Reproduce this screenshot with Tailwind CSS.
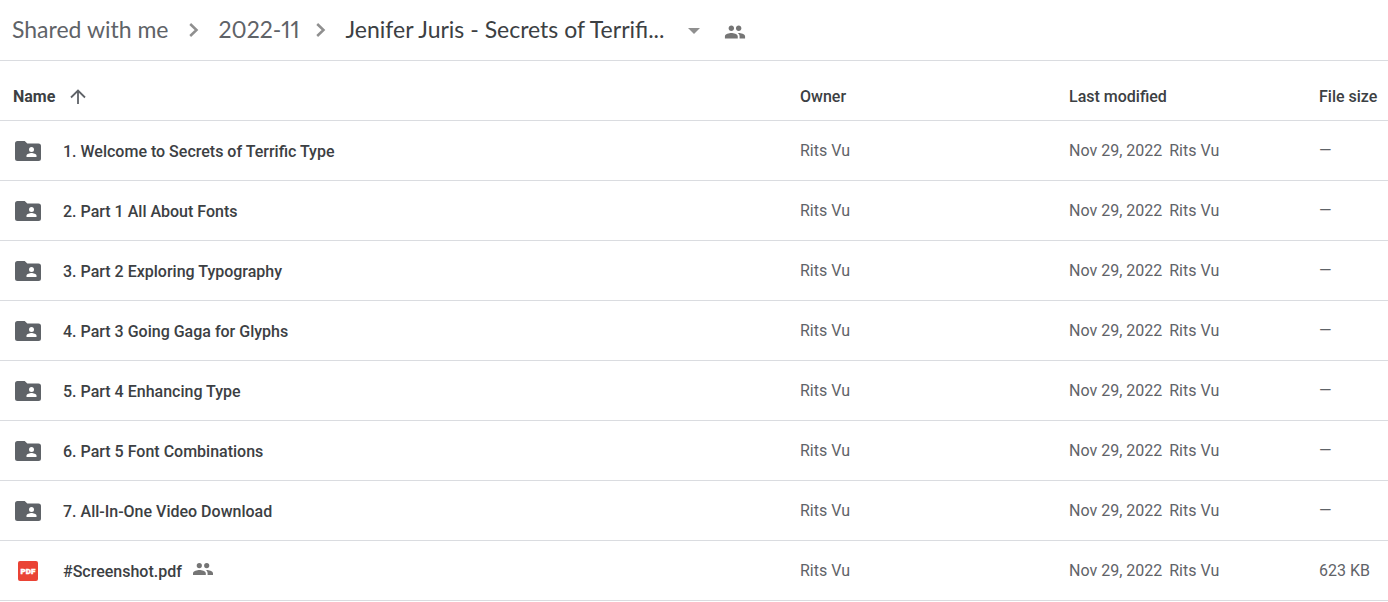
<!DOCTYPE html>
<html lang="en">
<head>
<meta charset="utf-8">
<meta name="viewport" content="width=device-width, initial-scale=1">
<title>Shared with me</title>
<script src="https://cdn.jsdelivr.net/npm/@tailwindcss/browser@4"></script>
</head>
<body class="bg-white font-['Roboto',sans-serif] text-base text-[#5f6368]">
<svg class="hidden" aria-hidden="true">
  <symbol id="folder" viewBox="0 0 26 20"><path fill="#5f6368" d="M2.500 0h7.200l2.600 2.500h11.200A2.500 2.500 0 0 1 26 5v12.500a2.500 2.500 0 0 1-2.500 2.500h-21A2.500 2.500 0 0 1 0 17.500v-15A2.500 2.500 0 0 1 2.500 0z"/><circle cx="16.500" cy="8.500" r="2.500" fill="#fff"/><path fill="#fff" d="M11.500 16v-1.300c0-1.700 3.300-2.600 5-2.600s5 .9 5 2.600V16z"/></symbol>
  <symbol id="people" viewBox="0 0 24 24"><path fill="currentColor" d="M16 11c1.660 0 2.990-1.340 2.990-3S17.660 5 16 5s-3 1.340-3 3 1.340 3 3 3zm-8 0c1.660 0 2.990-1.340 2.990-3S9.660 5 8 5 5 6.340 5 8s1.340 3 3 3zm0 2c-2.330 0-7 1.170-7 3.500V19h14v-2.500C15 14.170 10.330 13 8 13zm8 0c-.290 0-.620.020-.970.050C16.190 13.890 17 15.020 17 16.500V19h6v-2.500c0-2.330-4.670-3.500-7-3.500z"/></symbol>
  <symbol id="people-low" viewBox="0 0 20 12"><path fill="currentColor" d="M6.300 0a2.600 2.600 0 1 1 0 5.200 2.600 2.600 0 0 1 0-5.200zM13.700 0a2.600 2.600 0 1 1 0 5.200 2.600 2.600 0 0 1 0-5.200zM6.500 7C4.400 7 0 8 0 10.200V12h12.800v-1.800C12.800 8 8.600 7 6.500 7zM13.600 7l-.8.050c1 .7 1.800 1.700 1.800 3.100V12H20v-1.800C20 8 15.700 7 13.600 7z"/></symbol>
  <symbol id="chevron" viewBox="0 0 10 14"><path fill="none" stroke="#8f8f8f" stroke-width="2.500" d="M1.200 1l6.300 6-6.300 6"/></symbol>
</svg>
<header class="border-b border-[#dadce0]">
  <nav aria-label="Breadcrumb" class="flex h-15 items-center pb-0.5 pl-3 font-['Lato',sans-serif] text-[23px] leading-8 proportional-nums">
    <a href="#">Shared with me</a>
    <svg class="mx-5 mt-0.5 h-3.5 w-2.5"><use href="#chevron"/></svg>
    <a href="#">2022-11</a>
    <svg class="mt-0.5 mr-5 ml-4 h-3.5 w-2.5"><use href="#chevron"/></svg>
    <button type="button" class="flex items-center gap-6 text-[#3c4043]">Jenifer Juris - Secrets of Terrifi...
      <svg class="mt-1 h-1.5 w-3" viewBox="0 0 12 6"><path fill="#8f8f8f" d="M0 0h12L6 6z"/></svg>
    </button>
    <button type="button" aria-label="Shared" class="mt-1.5 ml-6 text-[#757575]"><svg class="size-[22px]"><use href="#people"/></svg></button>
  </nav>
</header>
<main>
  <table class="w-full table-fixed border-separate border-spacing-0 text-left">
    <colgroup><col><col class="w-[269px]"><col class="w-[250px]"><col class="w-[69px]"></colgroup>
    <thead>
      <tr class="h-15 text-[#3c4043] *:border-b *:border-[#dadce0] *:pt-3 *:font-medium">
        <th scope="col" class="pl-[13px]"><button type="button" class="flex items-center gap-[15px] font-bold">Name <svg class="size-4" viewBox="0 0 16 16"><path fill="none" stroke="#5f6368" stroke-width="1.800" d="M8 15V1.500M1 8.500l7-7 7 7"/></svg></button></th>
        <th scope="col">Owner</th><th scope="col">Last modified</th><th scope="col">File size</th>
      </tr>
    </thead>
    <tbody id="files"></tbody>
  </table>
</main>
<template id="row">
  <tr class="h-15 *:border-b *:border-[#dadce0]">
    <td><a href="#" class="flex items-center pl-[15px] font-medium text-[#3c4043]"><span class="icon flex w-12 shrink-0 items-center"><svg class="h-5 w-[26px]"><use href="#folder"/></svg></span><span class="name pt-0.5"></span></a></td>
    <td>Rits Vu</td><td><span class="mr-[7px]">Nov 29, 2022</span>Rits Vu</td><td class="size">—</td>
  </tr>
</template>
<template id="pdf"><svg class="ml-[3px] size-5" viewBox="0 0 20 20"><rect width="20" height="20" rx="2" fill="#ea4335"/><text x="10" y="13" text-anchor="middle" fill="#fff" stroke="#fff" stroke-width=".4" class="font-['Roboto',sans-serif] text-[8px] font-black">PDF</text></svg></template>
<template id="shared"><svg class="mb-1 ml-[11px] h-3 w-5 text-[#757575]"><use href="#people-low"/></svg></template>
<script>
  const $ = id => document.getElementById(id);
  const names = ['1. Welcome to Secrets of Terrific Type', '2. Part 1 All About Fonts', '3. Part 2 Exploring Typography', '4. Part 3 Going Gaga for Glyphs', '5. Part 4 Enhancing Type', '6. Part 5 Font Combinations', '7. All-In-One Video Download', '#Screenshot.pdf'];
  for (const name of names) {
    const row = $('row').content.cloneNode(true);
    row.querySelector('.name').textContent = name;
    if (name.endsWith('.pdf')) {
      row.querySelector('.icon').replaceChildren($('pdf').content.cloneNode(true));
      row.querySelector('.name').after($('shared').content.cloneNode(true));
      row.querySelector('.size').textContent = '623 KB';
    }
    $('files').append(row);
  }
</script>
</body>
</html>
